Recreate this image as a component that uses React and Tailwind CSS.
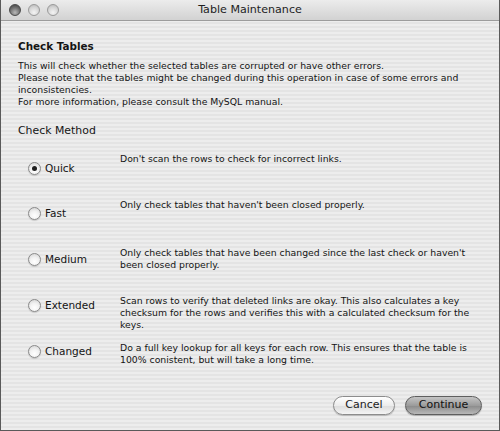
import React from 'react';

const methods = [
  {
    id: 'quick',
    label: 'Quick',
    checked: true,
    h: 'h-[46px]',
    labelTop: 'mt-[8px]',
    lines: ["Don't scan the rows to check for incorrect links."],
  },
  {
    id: 'fast',
    label: 'Fast',
    h: 'h-[48px]',
    labelTop: 'mt-[7px]',
    lines: ["Only check tables that haven't been closed properly."],
  },
  {
    id: 'medium',
    label: 'Medium',
    h: 'h-[48px]',
    labelTop: 'mt-[5px]',
    lines: [
      "Only check tables that have been changed since the last check or haven't",
      'been closed properly.',
    ],
  },
  {
    id: 'extended',
    label: 'Extended',
    h: 'h-[47px]',
    labelTop: 'mt-[3px]',
    lines: [
      'Scan rows to verify that deleted links are okay. This also calculates a key',
      'checksum for the rows and verifies this with a calculated checksum for the',
      'keys.',
    ],
  },
  {
    id: 'changed',
    label: 'Changed',
    h: 'h-[26px]',
    labelTop: 'mt-[2px]',
    lines: [
      'Do a full key lookup for all keys for each row. This ensures that the table is',
      '100% conistent, but will take a long time.',
    ],
  },
];

function Radio({ checked }) {
  return (
    <span className="relative flex h-[13px] w-[13px] shrink-0 items-center justify-center rounded-full border border-[#8a8a8a] bg-[radial-gradient(circle_at_50%_70%,#ffffff_0%,#f2f2f2_45%,#cfcfcf_100%)] shadow-[0_1px_1px_rgba(0,0,0,0.15)]">
      {checked && <span className="h-[5px] w-[5px] rounded-full bg-[#1e1e1e]" />}
    </span>
  );
}

function Light() {
  return (
    <span className="h-[12px] w-[12px] rounded-full border border-[#9a9a9a] bg-[radial-gradient(circle_at_50%_75%,#f4f4f4_0%,#d6d6d6_55%,#b4b4b4_100%)]" />
  );
}

export default function App() {
  return (
    <div className="flex h-[431px] w-[500px] flex-col border-x border-b border-[#5a5a5a] font-['DejaVu_Sans',sans-serif] text-[#141414]">
      {/* Title bar */}
      <div className="relative flex h-[21px] shrink-0 items-center border-b border-[#9c9c9c] bg-[linear-gradient(#ececec,#d2d2d2)]">
        <div className="flex items-center gap-[7px] pl-[8px]">
          <span className="h-[12px] w-[12px] rounded-full border border-[#4a4a4a] bg-[radial-gradient(circle_at_50%_75%,#b8b8b8_0%,#707070_55%,#3c3c3c_100%)]" />
          <Light />
          <Light />
        </div>
        <div className="absolute inset-x-0 top-0 flex h-full items-center justify-center text-[11.1px] text-[#1e1e1e]">
          Table Maintenance
        </div>
      </div>

      {/* Body */}
      <div className="flex flex-1 flex-col bg-[repeating-linear-gradient(0deg,#ededed_0px,#ededed_2px,#e4e4e4_2px,#e4e4e4_4px)] px-[17px] pt-[18px] pb-[15px]">
        <h1 className="text-[10.4px] leading-[14px] font-bold">Check Tables</h1>
        <div className="mt-[7px] text-[9.3px] leading-[12px]">
          <p>This will check whether the selected tables are corrupted or have other errors.</p>
          <p>Please note that the tables might be changed during this operation in case of some errors and</p>
          <p>inconsistencies.</p>
          <p>For more information, please consult the MySQL manual.</p>
        </div>

        <h2 className="mt-[16px] text-[10.9px] leading-[14px]">Check Method</h2>

        <div className="mt-[15px] flex flex-col">
          {methods.map((m) => (
            <div key={m.id} className={`flex items-start ${m.h}`}>
              <div className={`flex w-[102px] shrink-0 items-center gap-[4px] pl-[10px] ${m.labelTop}`}>
                <Radio checked={m.checked} />
                <span className="text-[10.5px] leading-[14px]">{m.label}</span>
              </div>
              <div className="text-[9.3px] leading-[12px]">
                {m.lines.map((l, i) => (
                  <p key={i}>{l}</p>
                ))}
              </div>
            </div>
          ))}
        </div>

        <div className="mt-auto flex justify-end gap-[10px]">
          <button className="flex h-[19px] w-[62px] items-center justify-center rounded-full border border-[#8c8c8c] bg-[linear-gradient(#ffffff,#ececec_50%,#dcdcdc_51%,#f4f4f4)] text-[11px] text-[#1b1b1b] shadow-[0_1px_1px_rgba(0,0,0,0.2)]">
            Cancel
          </button>
          <button className="flex h-[19px] w-[77px] items-center justify-center rounded-full border border-[#5e5e5e] bg-[linear-gradient(#c4c4c4,#9c9c9c_50%,#8a8a8a_51%,#b8b8b8)] text-[11px] text-[#111] shadow-[0_1px_1px_rgba(0,0,0,0.25)]">
            Continue
          </button>
        </div>
      </div>
    </div>
  );
}
